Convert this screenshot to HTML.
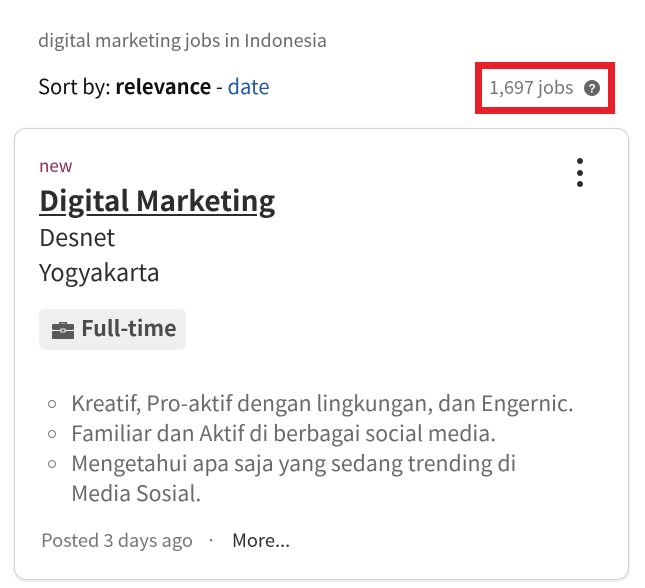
<!DOCTYPE html>
<html><head><style>
body{margin:0;width:645px;height:588px;background:#fff;font-family:"Noto Sans CJK JP","Liberation Sans",sans-serif;position:relative;overflow:hidden}
.a{position:absolute;white-space:nowrap;line-height:1}
</style></head><body>
<div class="a" style="left:38px;top:31px;font-size:18px;color:#6a6a6a">digital marketing jobs in Indonesia</div>
<div class="a" style="left:38px;top:76px;font-size:20.2px;color:#111">Sort by: <b>relevance</b> - <span style="color:#2557a7">date</span></div>
<div class="a" style="left:475px;top:62px;width:126px;height:38px;border:7px solid #e8202a"></div>
<div class="a" style="left:489px;top:78px;font-size:18px;color:#767676">1,697 jobs</div>
<svg class="a" style="left:584px;top:80px" width="16" height="16" viewBox="0 0 16 16"><circle cx="8" cy="8" r="8" fill="#666"/><text x="8" y="12.5" font-size="12" font-weight="bold" fill="#fff" text-anchor="middle" font-family="Liberation Sans">?</text></svg>
<div class="a" style="left:14px;top:128px;width:613px;height:450px;border:1px solid #d4d2d0;border-radius:12px;box-shadow:0 1px 3px rgba(0,0,0,.12)"></div>
<div class="a" style="left:39px;top:156px;font-size:17px;color:#8c2b5a">new</div>
<div class="a" style="left:39px;top:186px;font-size:28px;font-weight:bold;color:#2d2d2d;text-decoration:underline;text-underline-offset:3px">Digital Marketing</div>
<div class="a" style="left:39px;top:225px;font-size:23.5px;color:#2d2d2d">Desnet</div>
<div class="a" style="left:39px;top:260px;font-size:23.5px;color:#2d2d2d">Yogyakarta</div>
<div class="a" style="left:577px;top:158px;width:6px;height:6px;border-radius:50%;background:#2d2d2d"></div>
<div class="a" style="left:577px;top:170px;width:6px;height:6px;border-radius:50%;background:#2d2d2d"></div>
<div class="a" style="left:577px;top:181px;width:6px;height:6px;border-radius:50%;background:#2d2d2d"></div>
<div class="a" style="left:39px;top:309px;width:147px;height:41px;background:#f0efee;border-radius:6px"></div>
<svg class="a" style="left:52px;top:320px" width="22" height="19" viewBox="0 0 22 19"><path d="M7 4V2h8v2h-2V3.5H9V4z" fill="#595959"/><rect x="0" y="4" width="22" height="6" rx="1.5" fill="#595959"/><rect x="0" y="11" width="22" height="8" rx="1" fill="#595959"/><rect x="9" y="9" width="4" height="3" fill="#595959" stroke="#f0efee" stroke-width="1"/></svg>
<div class="a" style="left:81px;top:317px;font-size:21.5px;font-weight:bold;color:#4b4b4b">Full-time</div>
<div class="a" style="left:71px;top:388px;font-size:21.3px;line-height:30px;color:#6a6a6a">Kreatif, Pro-aktif dengan lingkungan, dan Engernic.<br>Familiar dan Aktif di berbagai social media.<br>Mengetahui apa saja yang sedang trending di<br>Media Sosial.</div>
<div class="a" style="left:48px;top:400px;width:6px;height:6px;border:1px solid #777;border-radius:50%"></div>
<div class="a" style="left:48px;top:430px;width:6px;height:6px;border:1px solid #777;border-radius:50%"></div>
<div class="a" style="left:48px;top:460px;width:6px;height:6px;border:1px solid #777;border-radius:50%"></div>
<div class="a" style="left:41px;top:531px;font-size:18.3px;color:#767676">Posted 3 days ago</div>
<div class="a" style="left:206px;top:531px;font-size:18px;color:#767676">·</div>
<div class="a" style="left:232px;top:531px;font-size:18.3px;color:#2d2d2d">More...</div>
</body></html>
